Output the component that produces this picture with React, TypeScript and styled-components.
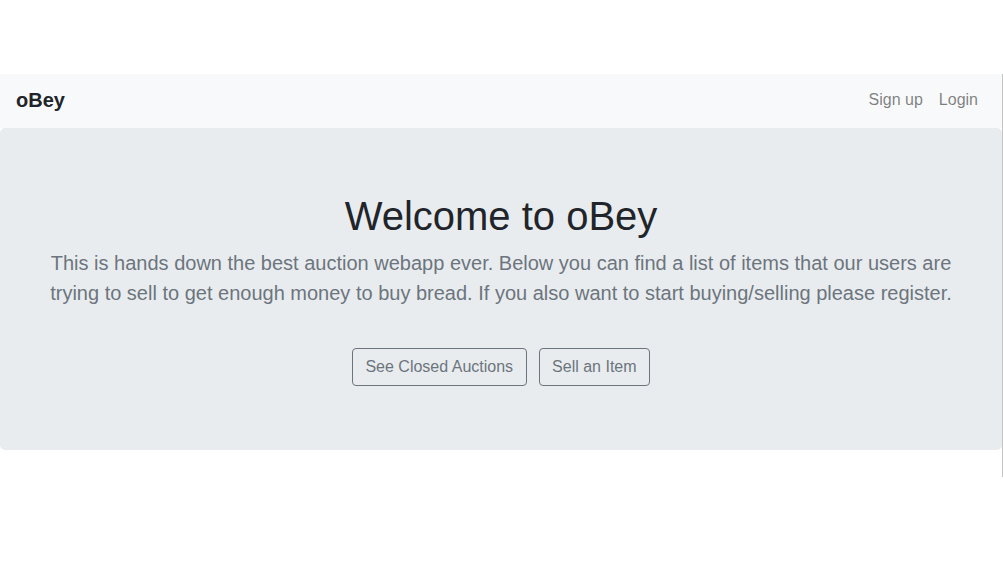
import React from "react";
import styled, { createGlobalStyle } from "styled-components";

const GlobalStyle = createGlobalStyle`
  html, body {
    margin: 0;
    padding: 0;
    background: #fff;
  }
  body {
    font-family: "Liberation Sans", Arial, sans-serif;
    font-size: 16px;
    line-height: 1.5;
    color: #212529;
  }
  * { box-sizing: border-box; }
`;

const Frame = styled.div`
  margin-top: 74px;
  width: 1003px;
  height: 403px;
  border-right: 1px solid #c4c4c4;
  display: flex;
  flex-direction: column;
`;

const NavBar = styled.nav`
  height: 54px;
  flex-shrink: 0;
  background: #f8f9fa;
  display: flex;
  align-items: center;
  justify-content: space-between;
  padding: 0 16px 2px;
`;

const Brand = styled.a`
  font-size: 20px;
  font-weight: 700;
  color: #212529;
  text-decoration: none;
  line-height: 30px;
`;

const NavLinks = styled.div`
  display: flex;
`;

const NavLink = styled.a`
  padding: 0 8px;
  color: rgba(0, 0, 0, 0.5);
  text-decoration: none;
  font-size: 16px;
  line-height: 24px;
`;

const Jumbotron = styled.section`
  background: #e9ecef;
  border-radius: 5px;
  padding: 64px 32px;
  text-align: center;
  height: 322px;
  flex-shrink: 0;
`;

const Title = styled.h1`
  margin: 0 0 8px;
  font-size: 40px;
  font-weight: 500;
  line-height: 48px;
`;

const Lead = styled.p`
  margin: 0 0 24px;
  font-size: 20px;
  font-weight: 300;
  line-height: 30px;
  color: #6c757d;
`;

const Actions = styled.div`
  display: flex;
  justify-content: center;
  gap: 12px;
  padding-top: 16px;
`;

const OutlineButton = styled.button`
  font-family: "Liberation Sans", Arial, sans-serif;
  font-size: 16px;
  line-height: 24px;
  padding: 6px 12.5px;
  color: #6c757d;
  background: transparent;
  border: 1px solid #6c757d;
  border-radius: 4px;
  cursor: pointer;
`;

export default function App() {
  return (
    <>
      <GlobalStyle />
      <Frame>
        <NavBar>
          <Brand href="#">oBey</Brand>
          <NavLinks>
            <NavLink href="#">Sign up</NavLink>
            <NavLink href="#">Login</NavLink>
          </NavLinks>
        </NavBar>
        <Jumbotron>
          <Title>Welcome to oBey</Title>
          <Lead>
            This is hands down the best auction webapp ever. Below you can find a list of items that our users are
            trying to sell to get enough money to buy bread. If you also want to start buying/selling please register.
          </Lead>
          <Actions>
            <OutlineButton>See Closed Auctions</OutlineButton>
            <OutlineButton>Sell an Item</OutlineButton>
          </Actions>
        </Jumbotron>
      </Frame>
    </>
  );
}
